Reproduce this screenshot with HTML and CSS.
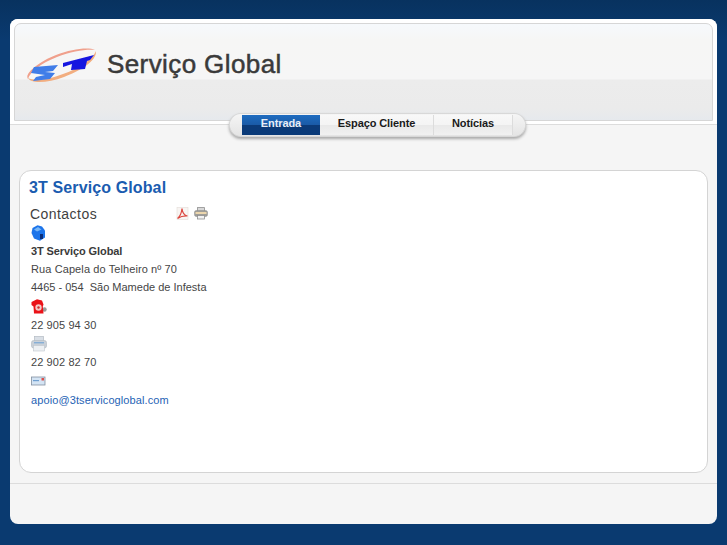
FILE: index.html
```html
<!DOCTYPE html>
<html lang="pt">
<head>
<meta charset="utf-8">
<title>3T Serviço Global</title>
<link rel="stylesheet" href="styles.css">
</head>
<body>
<div class="page">
  <header class="header">
    <div class="banner">
      <svg class="logo" width="72" height="36" viewBox="0 0 72 36" aria-hidden="true">
        <defs><filter id="soft"><feGaussianBlur stdDeviation="0.5"/></filter></defs>
        <g filter="url(#soft)">
          <path d="M2 31C-2 26 12 14 30 7C46 1 62-1 69 2C61 1 46 3 31 9C15 15 4 24 2 31Z" fill="#f0a08c"/>
          <path d="M2 30C5 36 22 35 38 29C54 23 71 13 70 3C67 11 52 21 37 26C22 32 8 33 2 30Z" fill="#f2ae80"/>
          <path d="M8 19L32 17L27 23L19 24L29 25L24 31L7 33L10 29L19 27L5 25Z" fill="#3f7de8"/>
          <path d="M37 15L68 7L64 12L61 13L59 21L45 22L46 16L37 19Z" fill="#1414e0"/>
        </g>
      </svg>
      <span class="brand">Serviço Global</span>
    </div>
  </header>
  <div class="nav-row">
    <nav class="nav">
      <a class="tab active" href="#"><span class="tab-text">Entrada</span></a>
      <a class="tab" href="#"><span class="tab-text">Espaço Cliente</span></a>
      <a class="tab tab-last" href="#"><span class="tab-text">Notícias</span></a>
    </nav>
  </div>
  <main class="card">
    <h1 class="title">3T Serviço Global</h1>
    <div class="sub-row">
      <h2 class="subtitle">Contactos</h2>
      <div class="tools">
        <svg width="13" height="13" viewBox="0 0 13 13" aria-hidden="true">
          <rect x="1" y="0.5" width="11" height="12" fill="#f8f5f3" stroke="#e4dcd8" stroke-width="0.6"/>
          <path d="M1.5 11.5C4 9.5 5.5 6 6 1.5C6.5 6 8 8.5 11.5 9C8 8.8 4.5 9.5 1.5 11.5Z" fill="none" stroke="#dc4a42" stroke-width="1.2"/>
        </svg>
        <svg width="14" height="13" viewBox="0 0 14 13" aria-hidden="true">
          <rect x="3.5" y="0.6" width="7" height="4" fill="#d8d8d8" stroke="#8f8f8f" stroke-width="0.8"/>
          <rect x="0.5" y="3.5" width="13" height="6" rx="1.8" fill="#a09e98" stroke="#8a8a8a" stroke-width="0.5"/>
          <rect x="1.5" y="5" width="11" height="2" fill="#ecd6ad"/>
          <rect x="3.5" y="8.5" width="7" height="3.5" fill="#f2f2f2" stroke="#8f8f8f" stroke-width="0.8"/>
        </svg>
      </div>
    </div>
    <div class="contact">
      <div class="icon-line">
        <svg width="15" height="16" viewBox="0 0 15 16" aria-hidden="true">
          <path d="M6.5 0.3L11 1.5L14 5.5V12.5L9 15.7L3 13.5L0.5 8L1.5 3Z" fill="#1c74ea"/>
          <path d="M3 4.5L7 2L10.5 4.5L6 6.5Z" fill="#78b6f7"/>
          <rect x="9" y="9" width="3" height="5" fill="#0a2f7c"/>
        </svg>
      </div>
      <div class="address">
        <p class="line strong">3T Serviço Global</p>
        <p class="line">Rua Capela do Telheiro nº 70</p>
        <p class="line tight">4465 - 054&nbsp; São Mamede de Infesta</p>
      </div>
      <div class="icon-line">
        <svg width="16" height="16" viewBox="0 0 16 16" aria-hidden="true">
          <circle cx="13.5" cy="10.5" r="2.2" fill="#9a9a9a"/>
          <path d="M0.5 3L6 0.3L11 1.5L12.5 5.5L11.8 7.5L12.5 14.5H3L2.5 7.5L0.5 6Z" fill="#ea1218"/>
          <circle cx="7.5" cy="8.5" r="3.2" fill="#f4c9c6"/>
          <circle cx="7.5" cy="8.5" r="1.2" fill="#cc2c2e"/>
        </svg>
      </div>
      <p class="line">22 905 94 30</p>
      <div class="icon-line">
        <svg width="16" height="16" viewBox="0 0 16 16" aria-hidden="true">
          <rect x="3.5" y="0.5" width="9" height="5" fill="#d9dfe6" stroke="#b4bbc3" stroke-width="0.7"/>
          <rect x="0.5" y="4.5" width="15" height="7.5" rx="2" fill="#c9d0d8" stroke="#b0b8c0" stroke-width="0.6"/>
          <rect x="3" y="6" width="10" height="1.4" fill="#86aed6"/>
          <rect x="2.5" y="9.5" width="11" height="5.5" fill="#edf0f3" stroke="#bfc5cc" stroke-width="0.6"/>
        </svg>
      </div>
      <p class="line">22 902 82 70</p>
      <div class="icon-line">
        <svg width="15" height="16" viewBox="0 0 15 16" aria-hidden="true">
          <rect x="0.5" y="4" width="13.5" height="8" fill="#d4e4f4" stroke="#8390a0" stroke-width="0.8"/>
          <rect x="2" y="7" width="6" height="1.2" fill="#6f9fd0"/>
          <rect x="10.5" y="5" width="2.5" height="2.5" fill="#dc4f4b"/>
        </svg>
      </div>
      <p class="line mail-line"><a class="mail" href="#">apoio@3tservicoglobal.com</a></p>
    </div>
  </main>
  <footer class="footer"></footer>
</div>
</body>
</html>
```
FILE: styles.css
```css
* { box-sizing: border-box; }
html, body { margin: 0; height: 100%; }
body {
  padding: 19px 10px 21px;
  background: linear-gradient(#08325f 0, #0a3a70 40px);
  font-family: "Liberation Sans", Arial, sans-serif;
  color: #3f3f3f;
  overflow: hidden;
}
.page {
  height: 505px;
  background: #f5f5f5;
  border-radius: 8px;
  display: flex;
  flex-direction: column;
}
.header {
  height: 106px;
  padding: 4px 4px 3px;
  background: #fff;
  border-radius: 8px 8px 0 0;
  border-bottom: 1px solid #dcdcdc;
}
.banner {
  height: 98px;
  display: flex;
  align-items: flex-start;
  padding: 24px 0 0 11px;
  border: 1px solid #d6d6d6;
  border-radius: 7px 7px 0 0;
  background: linear-gradient(#f6f9fc 0, #f6f6f5 16px, #f6f6f6 55px, #ececec 56px, #ebebeb 84px, #e6e9ed 100%);
}
.logo { flex: none; }
.brand {
  margin: 0 0 0 9px;
  padding-top: 1px;
  font-size: 26px;
  line-height: 30px;
  letter-spacing: 0.4px;
  color: #3a3a3a;
  -webkit-text-stroke: 0.5px #3a3a3a;
}
.nav-row {
  display: flex;
  padding-left: 220px;
  margin-top: -11px;
  height: 22px;
}
.nav {
  width: 295px;
  height: 22px;
  padding: 0 12px;
  display: flex;
  border-radius: 11px;
  background: linear-gradient(#f5f5f5, #e4e4e4);
  box-shadow: 0 0 0 1px #d8d8d8, 0 2px 3px 1px #a8a8a8;
}
.tab {
  height: 20px;
  margin-top: 1px;
  padding-bottom: 4px;
  display: flex;
  align-items: center;
  justify-content: center;
  font-size: 11px;
  font-weight: bold;
  color: #1a1a1a;
  text-decoration: none;
  letter-spacing: -0.1px;
  width: 114px;
  border-right: 1px solid #dcdcdc;
  background: linear-gradient(#f8f8f8 0, #f4f4f4 50%, #e9e9e9 51%, #f1f1f1 100%);
}
.tab.active {
  width: 78px;
  color: #e8eef6;
  border-right: 0;
  background: linear-gradient(#1e6cc0 0, #1a5aa6 50%, #0b3a78 51%, #0a3a78 100%);
}
.tab-last { width: 79px; }
.card {
  height: 303px;
  margin: 34px 9px 0;
  padding: 7px 9px;
  background: #fff;
  border: 1px solid #d4d4d4;
  border-radius: 12px;
}
.title {
  margin: 0;
  font-size: 16px;
  line-height: 20px;
  font-weight: bold;
  letter-spacing: 0.12px;
  color: #1a5cb0;
}
.sub-row {
  display: flex;
  align-items: flex-start;
  margin: 7px 0 0 1px;
  height: 18px;
}
.subtitle {
  margin: 0;
  width: 146px;
  font-size: 14px;
  line-height: 18px;
  font-weight: normal;
  letter-spacing: 0.45px;
  color: #3f3f3f;
}
.tools {
  display: flex;
  gap: 5px;
  margin-top: 2px;
}
.contact { padding-left: 2px; }
.icon-line {
  height: 19px;
  padding-top: 1px;
  display: flex;
  align-items: center;
}
.address { margin-bottom: 1px; }
.line {
  margin: 0;
  height: 18px;
  font-size: 11px;
  line-height: 18px;
  letter-spacing: 0.1px;
  white-space: nowrap;
  color: #454545;
}
.line.tight { letter-spacing: 0; }
.mail-line { padding-top: 1px; }
.strong { font-weight: bold; letter-spacing: -0.1px; color: #3a3a3a; }
.mail { color: #1f63b5; text-decoration: none; }
.footer {
  margin-top: 10px;
  flex: 1;
  border-top: 1px solid #dcdcdc;
}
```
